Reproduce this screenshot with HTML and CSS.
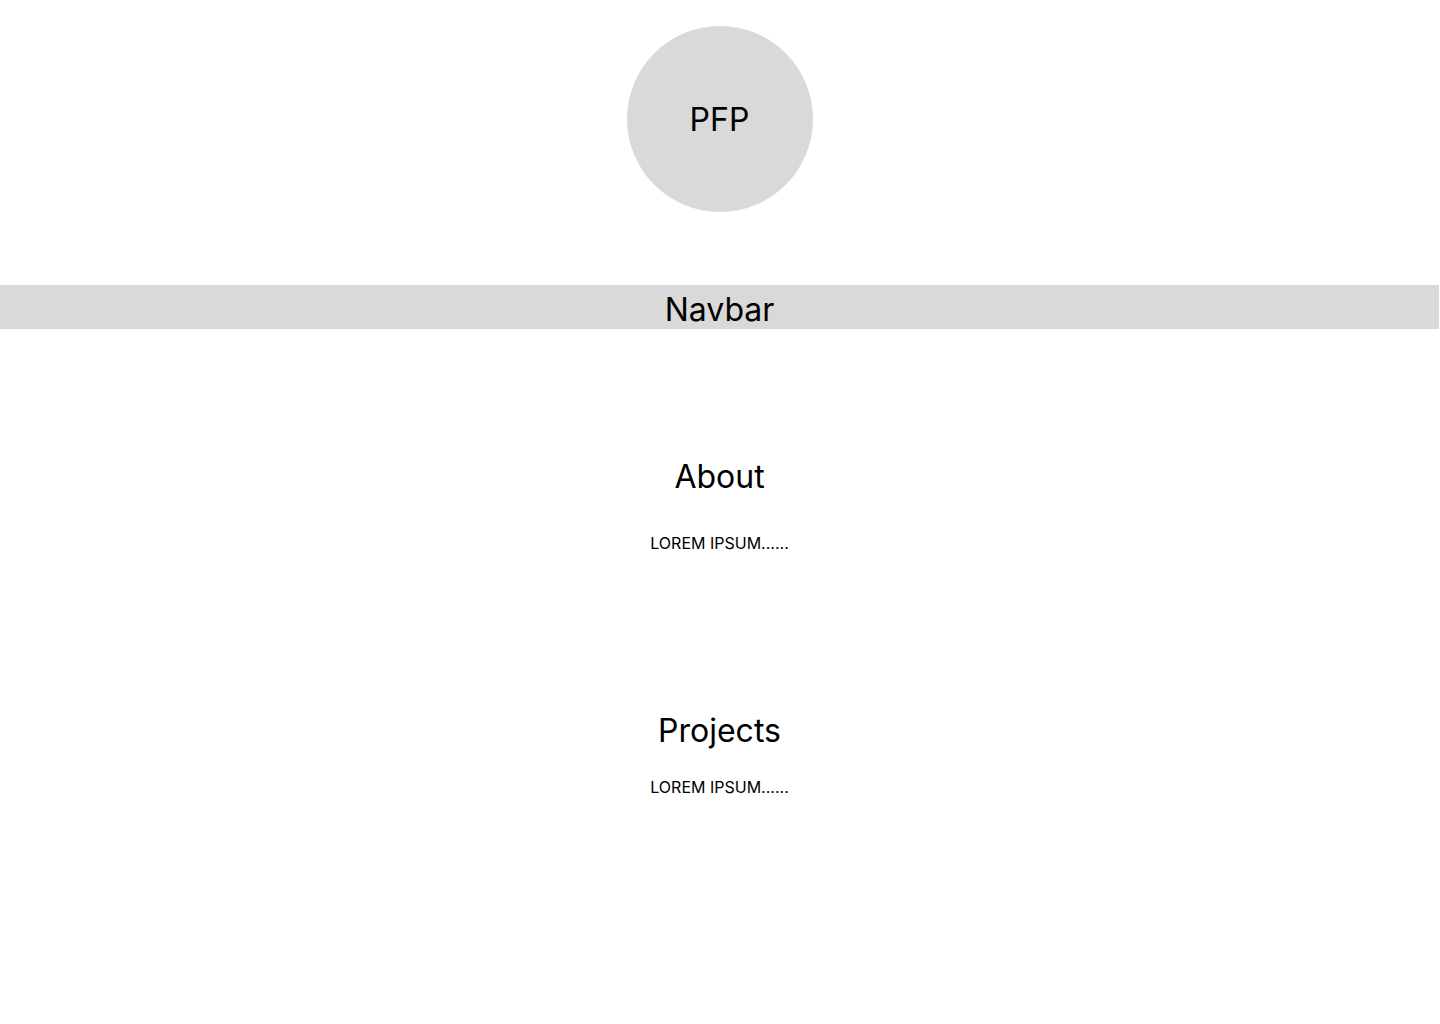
FILE: index.html
```html
<!DOCTYPE html>
<html lang="en">
<head>
<meta charset="utf-8">
<title>Portfolio</title>
<link rel="stylesheet" href="styles.css">
</head>
<body>
<div class="page">
  <header class="top">
    <div class="avatar">PFP</div>
  </header>
  <nav class="navbar">Navbar</nav>
  <section class="section about">
    <h2 class="section-title">About</h2>
    <p class="section-text about-text">LOREM IPSUM......</p>
  </section>
  <section class="section projects">
    <h2 class="section-title">Projects</h2>
    <p class="section-text projects-text">LOREM IPSUM......</p>
  </section>
</div>
</body>
</html>
```

FILE: styles.css
```css
html, body {
  margin: 0;
  padding: 0;
  background: #ffffff;
}

body {
  font-family: Inter, "Noto Sans", "Liberation Sans", sans-serif;
  color: #000000;
}

.page {
  width: 1439px;
  min-height: 1024px;
  display: flex;
  flex-direction: column;
  align-items: center;
}

.top {
  padding-top: 26px;
  display: flex;
  justify-content: center;
}

.avatar {
  width: 186px;
  height: 186px;
  box-sizing: border-box;
  padding-top: 2px;
  border-radius: 50%;
  background: #d9d9d9;
  display: flex;
  align-items: center;
  justify-content: center;
  font-size: 32px;
  line-height: 40px;
}

.navbar {
  margin-top: 73px;
  align-self: stretch;
  height: 44px;
  box-sizing: border-box;
  padding-top: 5px;
  background: #d9d9d9;
  text-align: center;
  font-size: 32px;
  line-height: 40px;
  overflow: hidden;
}

.section {
  display: flex;
  flex-direction: column;
  align-items: center;
}

.about {
  margin-top: 128px;
}

.projects {
  margin-top: 158px;
}

.section-title {
  margin: 0;
  font-size: 32px;
  font-weight: 400;
  line-height: 40px;
}

.section-text {
  margin: 0;
  font-size: 16px;
  line-height: 20px;
}

.about-text {
  margin-top: 36px;
}

.projects-text {
  margin-top: 26px;
}
```
